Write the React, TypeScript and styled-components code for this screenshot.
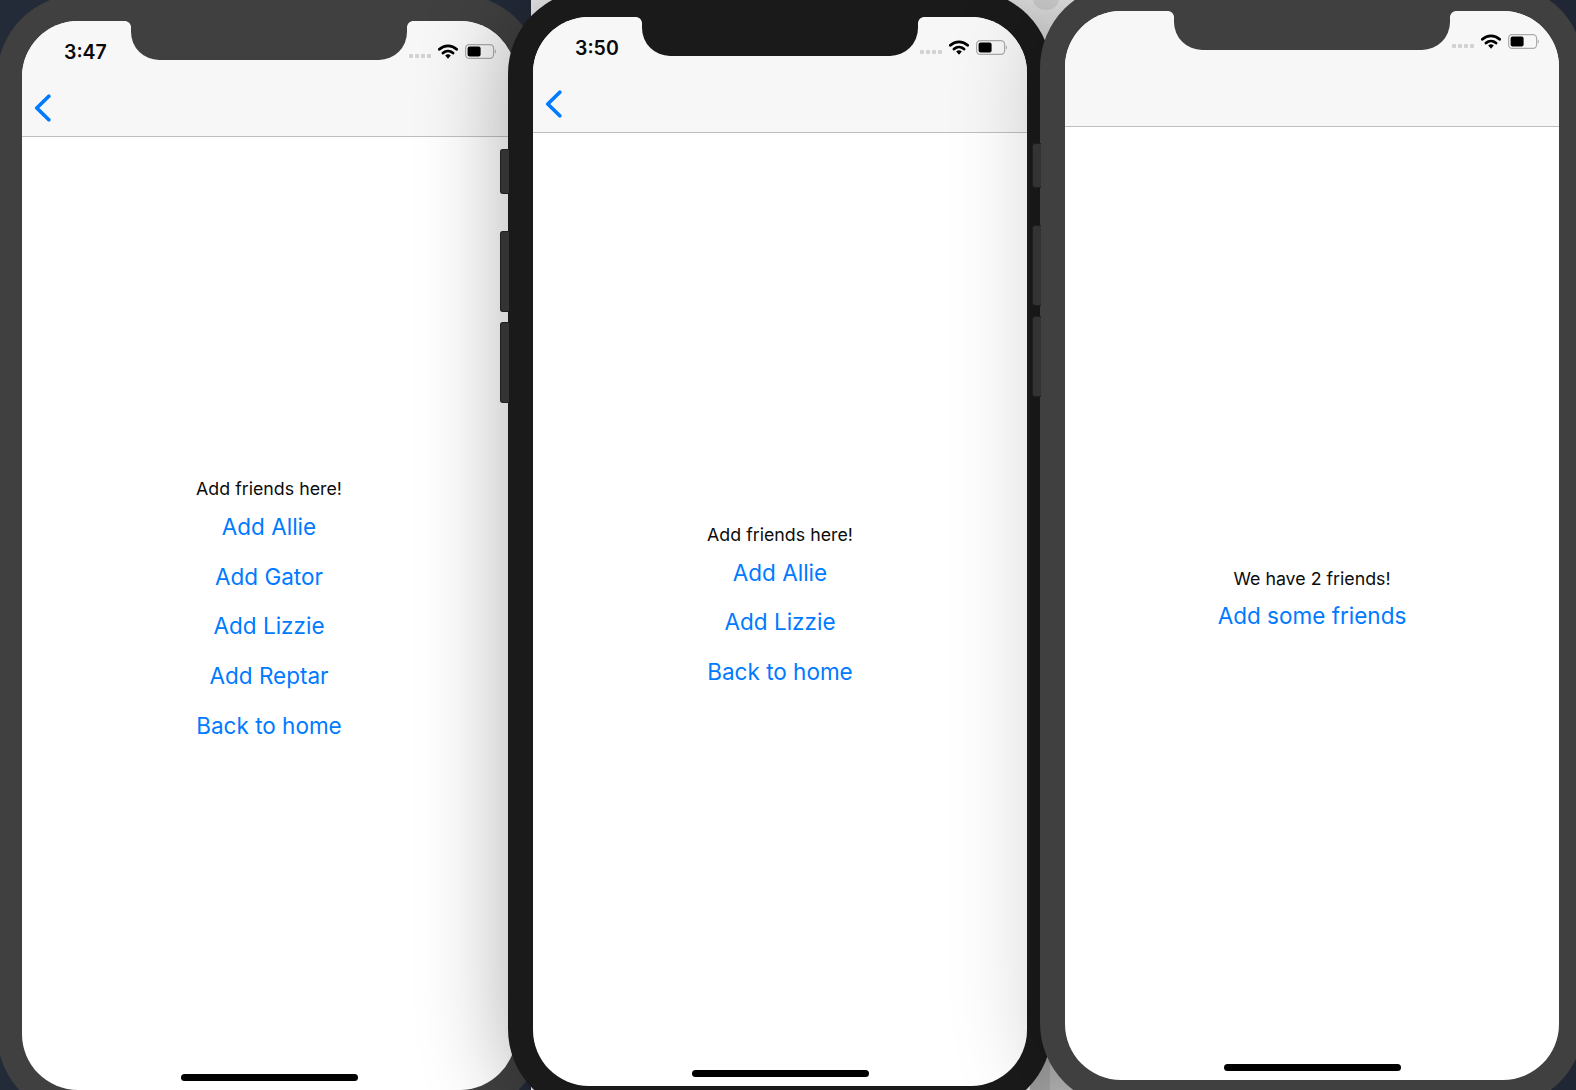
import React from "react";
import styled, { createGlobalStyle } from "styled-components";

const Global = createGlobalStyle`
  html, body { margin: 0; padding: 0; overflow: hidden; background: #232a38; }
  * { box-sizing: border-box; }
`;

const Stage = styled.main`
  position: relative;
  width: 1576px;
  height: 1090px;
  overflow: hidden;
  font-family: Inter, "Liberation Sans", sans-serif;
  background: linear-gradient(90deg, #232a38 531px, #efefef 531px, #efefef 1545px, #232a38 1545px);
`;

const DesktopDisc = styled.div`
  position: absolute;
  left: 1033px;
  top: -12px;
  width: 26px;
  height: 22px;
  border-radius: 50%;
  background: #dcdcdc;
`;

const DesktopPanel = styled.div`
  position: absolute;
  left: 1030px;
  top: 1050px;
  width: 50px;
  height: 40px;
  background: linear-gradient(90deg, #b0b0b0 20px, #c0c0c0 20px);
`;

const Frame = styled.section<{ $x: number; $y: number; $tone: string; $shade: number }>`
  position: absolute;
  left: ${(p) => p.$x}px;
  top: ${(p) => p.$y}px;
  width: 544px;
  height: 1123px;
  padding: 27px 25px;
  border-radius: 84px;
  background: ${(p) => p.$tone};
  box-shadow: 0 0 90px rgba(0, 0, 0, ${(p) => p.$shade});
`;

const SideButton = styled.span<{ $top: number; $height: number }>`
  position: absolute;
  left: -8px;
  top: ${(p) => p.$top}px;
  width: 9px;
  height: ${(p) => p.$height}px;
  border: 1px solid #1f1f1f;
  border-right: none;
  border-radius: 3px 0 0 3px;
  background: #333333;
`;

const Screen = styled.div`
  position: relative;
  display: flex;
  flex-direction: column;
  height: 100%;
  overflow: hidden;
  border-radius: 56px;
  background: #ffffff;
`;

const Notch = styled.div<{ $tone: string }>`
  position: absolute;
  left: 109px;
  top: 0;
  width: 276px;
  height: 39px;
  border-radius: 0 0 28px 28px;
  background: ${(p) => p.$tone};

  &::before,
  &::after {
    content: "";
    position: absolute;
    top: 0;
    width: 6px;
    height: 6px;
  }
  &::before {
    left: -6px;
    background: radial-gradient(circle at 0 100%, transparent 5.5px, ${(p) => p.$tone} 6.2px);
  }
  &::after {
    right: -6px;
    background: radial-gradient(circle at 100% 100%, transparent 5.5px, ${(p) => p.$tone} 6.2px);
  }
`;

const Header = styled.header`
  flex: none;
  height: 116px;
  background: #f7f7f7;
  border-bottom: 1px solid #bfbfbf;
`;

const StatusBar = styled.div`
  display: flex;
  justify-content: space-between;
  align-items: flex-start;
  height: 62px;
  padding: 23px 20px 0 42px;
`;

const Clock = styled.span`
  font-size: 19.5px;
  line-height: 16px;
  font-weight: 600;
  color: #0a0a0a;
`;

const Indicators = styled.div`
  display: flex;
  align-items: flex-start;
  margin-left: auto;
`;

const SignalDots = styled.div`
  display: flex;
  gap: 2px;
  margin: 10px 7px 0 0;
`;

const SignalDot = styled.i`
  display: block;
  width: 4px;
  height: 4px;
  border-radius: 1px;
  background: #d2d2d2;
`;

const WifiIcon = styled.svg`
  display: block;
  width: 20px;
  height: 15px;
  margin-right: 7px;
`;

const BatteryIcon = styled.svg`
  display: block;
  width: 31px;
  height: 15px;
`;

const NavBar = styled.nav`
  display: flex;
  align-items: flex-start;
  height: 53px;
  padding: 11px 0 0 12px;
`;

const BackIcon = styled.svg`
  display: block;
  width: 18px;
  height: 28px;
`;

const Content = styled.div`
  flex: 1;
  display: flex;
  flex-direction: column;
  align-items: center;
  justify-content: center;
`;

const Message = styled.p`
  margin: 1px 0 0;
  font-size: 17.8px;
  line-height: 24.6px;
  color: #0c0c0c;
`;

const LinkButton = styled.a`
  display: block;
  height: 49.7px;
  font-size: 22.5px;
  line-height: 49.7px;
  color: #007aff;
`;

const HomeBar = styled.div`
  position: absolute;
  left: 50%;
  bottom: 9px;
  width: 177px;
  height: 7px;
  margin-left: -88.5px;
  border-radius: 4px;
  background: #000000;
`;

type PhoneProps = {
  x: number;
  y: number;
  tone: string;
  shade: number;
  time?: string;
  back?: boolean;
  message: string;
  links: string[];
  buttons?: boolean;
};

const Wifi = () => (
  <WifiIcon viewBox="0 0 20 15">
    <path d="M1.4 5.3a12.6 12.6 0 0 1 17.2 0" fill="none" stroke="#000" strokeWidth="2.9" strokeLinecap="round" />
    <path d="M5 9a7.6 7.6 0 0 1 10 0" fill="none" stroke="#000" strokeWidth="2.9" strokeLinecap="round" />
    <path d="M7.2 11.6a4.2 4.2 0 0 1 5.6 0L10 14.8z" fill="#000" />
  </WifiIcon>
);

const Battery = () => (
  <BatteryIcon viewBox="0 0 31 15">
    <rect x="0.6" y="0.6" width="28" height="13.8" rx="3.6" fill="none" stroke="#ababab" strokeWidth="1.2" />
    <rect x="2.6" y="2.6" width="13" height="9.8" rx="2" fill="#000" />
    <path d="M29.9 5.4c.7.3 1 1.2 1 2.1s-.3 1.8-1 2.1z" fill="#a6a6a6" />
  </BatteryIcon>
);

const Phone = ({ x, y, tone, shade, time, back, message, links, buttons }: PhoneProps) => (
  <Frame $x={x} $y={y} $tone={tone} $shade={shade}>
    {buttons && (
      <>
        <SideButton $top={159} $height={45} />
        <SideButton $top={241} $height={81} />
        <SideButton $top={332} $height={81} />
      </>
    )}
    <Screen>
      <Header>
        <StatusBar>
          {time && <Clock>{time}</Clock>}
          <Indicators>
            <SignalDots>
              {[0, 1, 2, 3].map((d) => (
                <SignalDot key={d} />
              ))}
            </SignalDots>
            <Wifi />
            <Battery />
          </Indicators>
        </StatusBar>
        <NavBar>
          {back && (
            <BackIcon viewBox="0 0 18 28">
              <path d="M14.8 2.2 2.8 14l12 11.8" fill="none" stroke="#007aff" strokeWidth="3.7" strokeLinecap="round" strokeLinejoin="round" />
            </BackIcon>
          )}
        </NavBar>
      </Header>
      <Content>
        <Message>{message}</Message>
        {links.map((l) => (
          <LinkButton key={l}>{l}</LinkButton>
        ))}
      </Content>
      <Notch $tone={tone} />
      <HomeBar />
    </Screen>
  </Frame>
);

export default function App() {
  return (
    <Stage>
      <Global />
      <DesktopDisc />
      <DesktopPanel />
      <Phone
        x={-3}
        y={-6}
        tone="#404040"
        shade={0}
        time="3:47"
        back
        message="Add friends here!"
        links={["Add Allie", "Add Gator", "Add Lizzie", "Add Reptar", "Back to home"]}
      />
      <Phone
        x={508}
        y={-10}
        tone="#1a1a1a"
        shade={0.32}
        time="3:50"
        back
        buttons
        message="Add friends here!"
        links={["Add Allie", "Add Lizzie", "Back to home"]}
      />
      <Phone x={1040} y={-16} tone="#404040" shade={0.22} buttons message="We have 2 friends!" links={["Add some friends"]} />
    </Stage>
  );
}
